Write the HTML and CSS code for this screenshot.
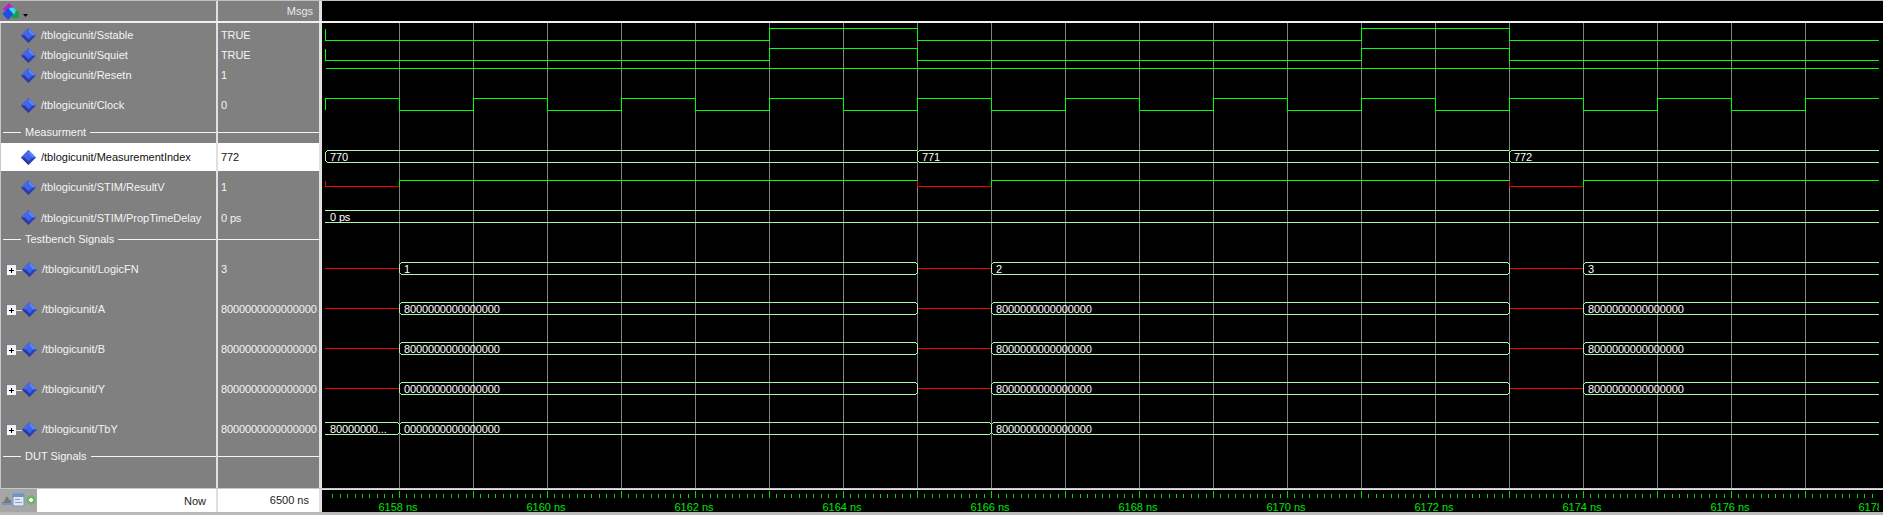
FILE: index.html

```html
<!DOCTYPE html>
<html lang="en">
<head>
    <meta charset="UTF-8">
    <title>Wave</title>
    <link rel="stylesheet" href="styles.css">
</head>
<body>
<svg class="defs" width="0" height="0">
    <symbol id="diamond" viewBox="0 0 15 15">
        <polygon points="7.5,0 15,7.5 7.5,15 0,7.5" fill="#2a3fb0"/>
        <polygon points="7.5,0 15,7.5 7.5,7.5" fill="#5f86f0"/>
        <polygon points="7.5,0 0,7.5 7.5,7.5" fill="#4a6ae0"/>
        <polygon points="3.5,7.5 7.5,3.5 11.5,7.5 7.5,11.5" fill="#3c64ee"/>
        <polygon points="0,7.5 7.5,15 7.5,11.5 3.5,7.5" fill="#2b3a9c"/>
    </symbol>
</svg>

<div class="window">
    <div class="header">
        <div class="head-names">
            <svg class="logo" width="30" height="19" viewBox="0 0 30 19">
                <polygon points="9,2 15,8 9,14 3,8" fill="#c020c0"/>
                <rect x="12" y="10" width="7" height="7" fill="#18a048"/>
                <circle cx="12" cy="10" r="3.5" fill="#30e0f0"/>
                <polygon points="8,7 13.5,13 8,19 2.5,13" fill="#1c50e0"/>
                <polygon points="23,13 28,13 25.5,16" fill="#000"/>
            </svg>
        </div>
        <div class="head-msgs">Msgs</div>
        <div class="sash"></div>
        <div class="head-wave"></div>
    </div>

    <div class="main">
        <div class="signals">
            <div class="row h2"><div class="name"></div><div class="val"></div></div>
            <div class="row h20"><div class="name"><svg class="sig"><use href="#diamond"/></svg>/tblogicunit/Sstable</div><div class="val">TRUE</div></div>
            <div class="row h20"><div class="name"><svg class="sig"><use href="#diamond"/></svg>/tblogicunit/Squiet</div><div class="val">TRUE</div></div>
            <div class="row h20"><div class="name"><svg class="sig"><use href="#diamond"/></svg>/tblogicunit/Resetn</div><div class="val">1</div></div>
            <div class="row h40"><div class="name"><svg class="sig"><use href="#diamond"/></svg>/tblogicunit/Clock</div><div class="val">0</div></div>
            <div class="row h18 divider"><div class="name"><span class="rule short"></span><span>Measurment</span><span class="rule"></span></div><div class="val"><span class="rule"></span></div></div>
            <div class="row h28 selected"><div class="name"><svg class="sig"><use href="#diamond"/></svg>/tblogicunit/MeasurementIndex</div><div class="val">772</div></div>
            <div class="row h32"><div class="name"><svg class="sig"><use href="#diamond"/></svg>/tblogicunit/STIM/ResultV</div><div class="val">1</div></div>
            <div class="row h29"><div class="name"><svg class="sig"><use href="#diamond"/></svg>/tblogicunit/STIM/PropTimeDelay</div><div class="val">0 ps</div></div>
            <div class="row h17 divider"><div class="name"><span class="rule short"></span><span>Testbench Signals</span><span class="rule"></span></div><div class="val"><span class="rule"></span></div></div>
            <div class="row h40"><div class="name group"><span class="twist"></span><svg class="sig"><use href="#diamond"/></svg>/tblogicunit/LogicFN</div><div class="val">3</div></div>
            <div class="row h40"><div class="name group"><span class="twist"></span><svg class="sig"><use href="#diamond"/></svg>/tblogicunit/A</div><div class="val">8000000000000000</div></div>
            <div class="row h40"><div class="name group"><span class="twist"></span><svg class="sig"><use href="#diamond"/></svg>/tblogicunit/B</div><div class="val">8000000000000000</div></div>
            <div class="row h40"><div class="name group"><span class="twist"></span><svg class="sig"><use href="#diamond"/></svg>/tblogicunit/Y</div><div class="val">8000000000000000</div></div>
            <div class="row h40"><div class="name group"><span class="twist"></span><svg class="sig"><use href="#diamond"/></svg>/tblogicunit/TbY</div><div class="val">8000000000000000</div></div>
            <div class="row h14 divider"><div class="name"><span class="rule short"></span><span>DUT Signals</span><span class="rule"></span></div><div class="val"><span class="rule"></span></div></div>
            <div class="row rest"><div class="name"></div><div class="val"></div></div>
        </div>
        <div class="sash"></div>

        <!-- viewBox uses page coordinates so the numbers read the same as the screenshot -->
        <svg class="waves" viewBox="322 23 1561 465" shape-rendering="crispEdges">
            <defs>
                <pattern id="grid" x="399" y="23" width="74" height="465" patternUnits="userSpaceOnUse">
                    <rect width="1" height="465" fill="#808080"/>
                </pattern>
            </defs>
            <rect x="399" y="23" width="1407" height="465" fill="url(#grid)"/>

            <!-- Sstable -->
            <path class="lo" d="M325.5 29V40.5H769.5V28.5H917.5V40.5H1361.5V28.5H1509.5V40.5H1879"/>
            <!-- Squiet -->
            <path class="lo" d="M325.5 49V60.5H769.5V48.5H917.5V60.5H1361.5V48.5H1509.5V60.5H1879"/>
            <!-- Resetn -->
            <path class="lo" d="M326 68.5H1879"/>
            <!-- Clock -->
            <path class="lo" d="M325.5 110V98.5H399.5V110.5H473.5V98.5H547.5V110.5H621.5V98.5H695.5V110.5H769.5V98.5H843.5V110.5H917.5V98.5H991.5V110.5H1065.5V98.5H1139.5V110.5H1213.5V98.5H1287.5V110.5H1361.5V98.5H1435.5V110.5H1509.5V98.5H1583.5V110.5H1657.5V98.5H1731.5V110.5H1805.5V98.5H1879"/>

            <!-- MeasurementIndex -->
            <path class="bus" d="M917 150.5H327.5L325.5 152.5V160.5L327.5 162.5H917"/>
            <path class="bus" d="M1509 150.5H919.5L917.5 152.5V160.5L919.5 162.5H1509"/>
            <path class="bus" d="M1879 150.5H1511.5L1509.5 152.5V160.5L1511.5 162.5H1879"/>
            <text class="busval" x="330" y="161">770</text>
            <text class="busval" x="922" y="161">771</text>
            <text class="busval" x="1514" y="161">772</text>

            <!-- ResultV -->
            <path class="x" d="M325.5 181V186.5H399"/>
            <path class="lo" d="M399.5 186V180.5H917"/>
            <path class="x" d="M917.5 181V186.5H991"/>
            <path class="lo" d="M991.5 186V180.5H1509"/>
            <path class="x" d="M1509.5 181V186.5H1583"/>
            <path class="lo" d="M1583.5 186V180.5H1879"/>

            <!-- PropTimeDelay -->
            <path class="bus" d="M325 210.5H1879M325 222.5H1879"/>
            <text class="busval" x="330" y="221">0 ps</text>

            <!-- LogicFN -->
            <path class="x" d="M325 268.5H399M917 268.5H991M1509 268.5H1583"/>
            <path class="bus" d="M401.5 262.5H915.5L917.5 264.5V272.5L915.5 274.5H401.5L399.5 272.5V264.5Z"/>
            <path class="bus" d="M993.5 262.5H1507.5L1509.5 264.5V272.5L1507.5 274.5H993.5L991.5 272.5V264.5Z"/>
            <path class="bus" d="M1879 262.5H1585.5L1583.5 264.5V272.5L1585.5 274.5H1879"/>
            <text class="busval" x="404" y="273">1</text>
            <text class="busval" x="996" y="273">2</text>
            <text class="busval" x="1588" y="273">3</text>

            <!-- A -->
            <path class="x" d="M325 308.5H399M917 308.5H991M1509 308.5H1583"/>
            <path class="bus" d="M401.5 302.5H915.5L917.5 304.5V312.5L915.5 314.5H401.5L399.5 312.5V304.5Z"/>
            <path class="bus" d="M993.5 302.5H1507.5L1509.5 304.5V312.5L1507.5 314.5H993.5L991.5 312.5V304.5Z"/>
            <path class="bus" d="M1879 302.5H1585.5L1583.5 304.5V312.5L1585.5 314.5H1879"/>
            <text class="busval" x="404" y="313">8000000000000000</text>
            <text class="busval" x="996" y="313">8000000000000000</text>
            <text class="busval" x="1588" y="313">8000000000000000</text>

            <!-- B -->
            <path class="x" d="M325 348.5H399M917 348.5H991M1509 348.5H1583"/>
            <path class="bus" d="M401.5 342.5H915.5L917.5 344.5V352.5L915.5 354.5H401.5L399.5 352.5V344.5Z"/>
            <path class="bus" d="M993.5 342.5H1507.5L1509.5 344.5V352.5L1507.5 354.5H993.5L991.5 352.5V344.5Z"/>
            <path class="bus" d="M1879 342.5H1585.5L1583.5 344.5V352.5L1585.5 354.5H1879"/>
            <text class="busval" x="404" y="353">8000000000000000</text>
            <text class="busval" x="996" y="353">8000000000000000</text>
            <text class="busval" x="1588" y="353">8000000000000000</text>

            <!-- Y -->
            <path class="x" d="M325 388.5H399M917 388.5H991M1509 388.5H1583"/>
            <path class="bus" d="M401.5 382.5H915.5L917.5 384.5V392.5L915.5 394.5H401.5L399.5 392.5V384.5Z"/>
            <path class="bus" d="M993.5 382.5H1507.5L1509.5 384.5V392.5L1507.5 394.5H993.5L991.5 392.5V384.5Z"/>
            <path class="bus" d="M1879 382.5H1585.5L1583.5 384.5V392.5L1585.5 394.5H1879"/>
            <text class="busval" x="404" y="393">0000000000000000</text>
            <text class="busval" x="996" y="393">8000000000000000</text>
            <text class="busval" x="1588" y="393">8000000000000000</text>

            <!-- TbY -->
            <path class="bus" d="M325 422.5H397.5L399.5 424.5V432.5L397.5 434.5H325"/>
            <path class="bus" d="M401.5 422.5H989.5L991.5 424.5V432.5L989.5 434.5H401.5L399.5 432.5V424.5Z"/>
            <path class="bus" d="M1879 422.5H993.5L991.5 424.5V432.5L993.5 434.5H1879"/>
            <text class="busval" x="330" y="433">80000000...</text>
            <text class="busval" x="404" y="433">0000000000000000</text>
            <text class="busval" x="996" y="433">8000000000000000</text>
        </svg>
    </div>

    <div class="footer">
        <div class="now">
            <svg class="tools" width="37" height="23" viewBox="0 0 37 23">
                <rect width="37" height="23" fill="#a6a6a6"/>
                <path d="M2 13h2l2-5h2l1 3h2v3H2z" fill="#777"/>
                <rect x="2" y="14" width="10" height="2" fill="#6f94c8"/>
                <rect x="13" y="5" width="11" height="12" fill="#dfe8f4" stroke="#6f94c8"/>
                <rect x="13" y="5" width="11" height="3" fill="#6f94c8"/>
                <rect x="15" y="10" width="5" height="1" fill="#8a9cb8"/>
                <rect x="15" y="13" width="7" height="1" fill="#8a9cb8"/>
                <circle cx="31" cy="11" r="5" fill="#6fb870"/>
                <path d="M29 11h4M31 9v4" stroke="#fff" stroke-width="2"/>
            </svg>
            <span class="now-label">Now</span>
        </div>
        <div class="now-time">6500 ns</div>
        <div class="sash"></div>
        <svg class="ruler" viewBox="322 490 1557 22">
            <defs>
                <pattern id="ticks" x="325" y="491" width="74" height="8" patternUnits="userSpaceOnUse">
                    <path d="M0.5 0V7M7.5 3V7M15.5 3V7M22.5 3V7M30.5 3V7M37.5 3V7M44.5 3V7M52.5 3V7M59.5 3V7M67.5 3V7" stroke="#00e000" shape-rendering="crispEdges"/>
                </pattern>
            </defs>
            <rect x="332" y="491" width="1544" height="8" fill="url(#ticks)"/>
            <text class="tlabel" x="398" y="510.5">6158 ns</text>
            <text class="tlabel" x="546" y="510.5">6160 ns</text>
            <text class="tlabel" x="694" y="510.5">6162 ns</text>
            <text class="tlabel" x="842" y="510.5">6164 ns</text>
            <text class="tlabel" x="990" y="510.5">6166 ns</text>
            <text class="tlabel" x="1138" y="510.5">6168 ns</text>
            <text class="tlabel" x="1286" y="510.5">6170 ns</text>
            <text class="tlabel" x="1434" y="510.5">6172 ns</text>
            <text class="tlabel" x="1582" y="510.5">6174 ns</text>
            <text class="tlabel" x="1730" y="510.5">6176 ns</text>
            <text class="tlabel" x="1878" y="510.5">6178 ns</text>
        </svg>
        <div class="ruler-end"></div>
    </div>
</div>
</body>
</html>
```

FILE: styles.css

```css
* {
    box-sizing: border-box;
}
html, body {
    margin: 0;
    padding: 0;
    height: 100%;
    overflow: hidden;
}
body {
    font-family: "Liberation Sans", Arial, sans-serif;
    font-size: 11px;
    color: #f4f4f4;
    background: #808080;
}
.defs {
    display: block;
    height: 0;
}
.window {
    display: flex;
    flex-direction: column;
    width: 1883px;
    height: 515px;
    border-top: 1px solid #c0c0c0;
}
.sash {
    width: 3px;
    background: #e0e0e0;
    flex: none;
}

/* header */
.header {
    display: flex;
    height: 22px;
    border-bottom: 2px solid #f0f0f0;
    flex: none;
}
.head-names {
    width: 216px;
    margin-right: 2px;
    background: #808080;
    box-shadow: 2px 0 0 #e0e0e0;
}
.logo {
    display: block;
}
.head-msgs {
    width: 101px;
    background: #808080;
    text-align: right;
    padding: 4px 6px 0 0;
    color: #e8e8e8;
}
.head-wave {
    flex: 1;
    background: #000;
}

/* signal list */
.main {
    display: flex;
    height: 465px;
    flex: none;
}
.signals {
    width: 319px;
    display: flex;
    flex-direction: column;
    border-left: 1px solid #c8c8c8;
}
.row {
    display: grid;
    grid-template-columns: 215px 101px;
    column-gap: 2px;
    background: #e0e0e0;
    flex: none;
}
.h2 { height: 2px; }
.h14 { height: 14px; }
.h17 { height: 17px; }
.h18 { height: 18px; }
.h20 { height: 20px; }
.h28 { height: 28px; }
.h29 { height: 29px; }
.h32 { height: 32px; }
.h40 { height: 40px; }
.rest {
    flex: 1;
}
.name, .val {
    display: flex;
    align-items: center;
    background: #808080;
    white-space: nowrap;
}
.name {
    padding-left: 20px;
}
.name.group {
    padding-left: 6px;
}
.val {
    padding-left: 3px;
    letter-spacing: -0.14px;
}
.selected .name, .selected .val {
    background: #fff;
    color: #111;
}
.sig {
    width: 15px;
    height: 15px;
    margin-right: 5px;
    flex: none;
}
.twist {
    width: 15px;
    height: 11px;
    margin-top: 3px;
    flex: none;
    background:
        linear-gradient(#000, #000) 2px 5px / 5px 1px no-repeat,
        linear-gradient(#000, #000) 4px 3px / 1px 5px no-repeat,
        linear-gradient(#e8e8f4, #fff) 0 0 / 9px 10px no-repeat,
        linear-gradient(#e0e0e0, #e0e0e0) 9px 5px / 6px 1px no-repeat;
}

/* divider rows */
.divider .name {
    padding-left: 2px;
    gap: 4px;
    align-items: flex-start;
}
.divider .val {
    padding-left: 0;
    align-items: flex-start;
}
.divider span {
    line-height: 14px;
}
.divider .rule {
    flex: 1;
    height: 1px;
    background: #f4f4f4;
    margin-top: 7px;
}
.divider .rule.short {
    flex: none;
    width: 18px;
}

/* wave window */
.waves {
    flex: 1;
    display: block;
    height: 465px;
    background: #000;
}
.waves path {
    fill: none;
}
.lo {
    stroke: #00ff00;
}
.x {
    stroke: #ff0000;
}
.bus {
    stroke: #a8f8a8;
}
.busval {
    fill: #fff;
    font-size: 11px;
    letter-spacing: -0.14px;
    shape-rendering: auto;
}

/* footer */
.footer {
    display: flex;
    height: 27px;
    flex: none;
    border-top: 1px solid #c8c8c8;
    border-bottom: 3px solid #b8b8b8;
    background: #e0e0e0;
}
.now {
    display: flex;
    align-items: center;
    width: 216px;
    margin-right: 2px;
    background: #fff;
}
.tools {
    display: block;
    flex: none;
}
.now-label {
    margin-left: auto;
    padding-right: 10px;
    color: #222;
}
.now-time {
    width: 101px;
    line-height: 23px;
    background: #fff;
    color: #222;
    text-align: right;
    padding-right: 10px;
}
.ruler {
    width: 1557px;
    height: 22px;
    margin-top: 1px;
    background: #000;
    display: block;
    flex: none;
}
.ruler-end {
    flex: 1;
    height: 22px;
    margin-top: 1px;
    background: #000;
}
.tlabel {
    fill: #00e800;
    font-size: 11px;
    text-anchor: middle;
}
```
